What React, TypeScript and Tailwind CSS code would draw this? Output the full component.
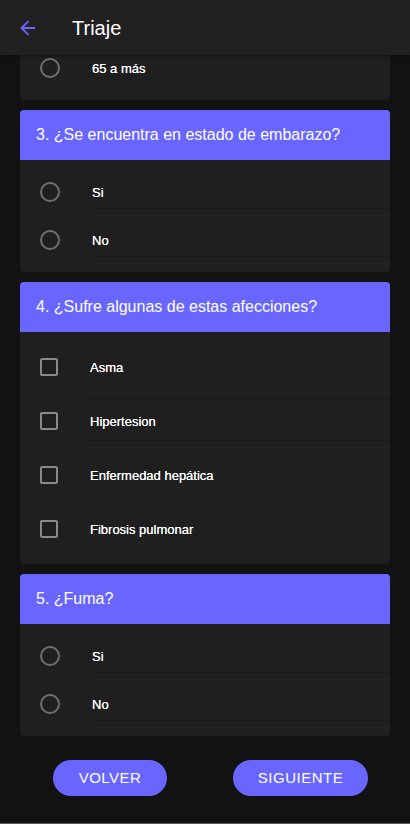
import React from "react";

const font = { fontFamily: '"Liberation Sans", Arial, sans-serif' };

function Radio() {
  return <span className="block w-[20px] h-[20px] rounded-full border-2 border-[#707070] box-border" />;
}
function Check() {
  return <span className="block w-[18px] h-[18px] rounded-[2px] border-2 border-[#8a8a8a] box-border" />;
}

function Row({ label, kind }: { label: string; kind: "radio" | "check" }) {
  const isRadio = kind === "radio";
  return (
    <div className={`flex items-center ${isRadio ? "h-[48px]" : "h-[54px]"} relative`}>
      <div className={`${isRadio ? "w-[72px]" : "w-[70px]"} pl-[20px] flex items-center`}>
        {isRadio ? <Radio /> : <Check />}
      </div>
      <span className="pt-[2px] text-[13px] text-white [text-shadow:0_0_0.5px_#ffffff]">{label}</span>
      <div className={`absolute bottom-0 ${isRadio ? "left-[72px]" : "left-[69px]"} right-0 h-px bg-[#262626]`} />
    </div>
  );
}

function Card({ title, kind, options }: { title: string; kind: "radio" | "check"; options: string[] }) {
  return (
    <div className="bg-[#1f1f1f] rounded-[4px] overflow-hidden">
      <div className="h-[50px] bg-[#6966ff] flex items-center pl-[16px] text-white text-[16px]">{title}</div>
      <div className="py-[8px]">
        {options.map((o) => (
          <Row key={o} label={o} kind={kind} />
        ))}
      </div>
    </div>
  );
}

export default function App() {
  return (
    <div className="w-[410px] h-[824px] bg-[#121212] overflow-hidden relative" style={font}>
      <div className="relative z-10 h-[55px] bg-[#212121] flex items-center shadow-[0_1px_3px_rgba(0,0,0,0.4)]">
        <div className="w-[72px] pl-[17px] flex items-center">
          <svg width="22" height="22" viewBox="0 0 24 24" fill="none" stroke="#6c63ff" strokeWidth="2" strokeLinecap="round" strokeLinejoin="round">
            <path d="M19 12H5" />
            <path d="M12 19l-7-7 7-7" />
          </svg>
        </div>
        <span className="text-white text-[20px] font-medium">Triaje</span>
      </div>
      <div className="px-[20px] flex flex-col gap-[10px] -mt-[11px]">
        <div className="bg-[#1f1f1f] rounded-b-[4px] pb-[8px]">
          <Row label="65 a más" kind="radio" />
        </div>
        <Card title="3. ¿Se encuentra en estado de embarazo?" kind="radio" options={["Si", "No"]} />
        <Card
          title="4. ¿Sufre algunas de estas afecciones?"
          kind="check"
          options={["Asma", "Hipertesion", "Enfermedad hepática", "Fibrosis pulmonar"]}
        />
        <Card title="5. ¿Fuma?" kind="radio" options={["Si", "No"]} />
      </div>
      <div className="flex justify-between pl-[53px] pr-[42px] mt-[24px]">
        <button className="w-[114px] h-[36px] rounded-full bg-[#6966ff] text-white text-[15px] font-medium tracking-[0.5px]">VOLVER</button>
        <button className="w-[135px] h-[36px] rounded-full bg-[#6966ff] text-white text-[15px] font-medium tracking-[0.5px]">SIGUIENTE</button>
      </div>
      <div className="absolute bottom-0 left-0 right-0 h-px bg-[#5a5a5a]" />
    </div>
  );
}
